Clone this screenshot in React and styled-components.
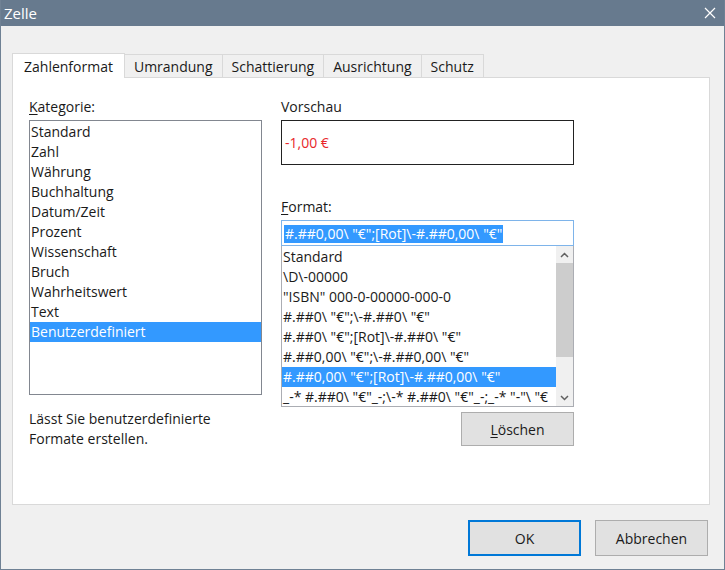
import React from 'react'
import styled, { createGlobalStyle } from 'styled-components'

const Global = createGlobalStyle`
    html, body { margin:0; padding:0; background:#f0f0f0; }
    * { box-sizing:border-box; }
`

const Window = styled.div`
    width:725px;
    height:570px;
    display:flex;
    flex-direction:column;
    background-color:#f0f0f0;
    border:1px solid #6f8194;
    border-top:none;
    font-family:"Open Sans", "Noto Sans", sans-serif;
    font-size:14px;
    color:#1a1a1a;
`

const TitleBar = styled.div`
    height:26px;
    background-color:#677a8e;
    color:#fff;
    display:flex;
    align-items:center;
    justify-content:space-between;
    padding:0 8px 0 3px;
    font-size:15px;
`

const Body = styled.div`
    flex:1;
    display:flex;
    flex-direction:column;
    padding:27px 14px 0 11px;
`

const Tabs = styled.div`
    display:flex;
    height:24px;
    align-items:flex-end;
`

const Tab = styled.div`
    height:${({active})=>active ? '25px' : '23px'};
    padding:0 ${({active})=>active ? '11px' : '9px'};
    display:flex;
    align-items:center;
    background-color:${({active})=>active ? '#fff' : '#f0f0f0'};
    border:1px solid #d9d9d9;
    border-bottom:none;
    margin-left:-1px;
    position:relative;
    z-index:${({active})=>active ? 1 : 0};
    margin-bottom:${({active})=>active ? '-1px' : '0'};
    &:first-child { margin-left:0; }
`

const Panel = styled.div`
    height:428px;
    background-color:#fff;
    border:1px solid #d9d9d9;
    padding:19px 0 0 16px;
    display:grid;
    grid-template-columns:233px 293px;
    column-gap:19px;
    align-items:start;
`

const Column = styled.div`
    display:flex;
    flex-direction:column;
`

const Label = styled.div`
    height:20px;
    line-height:20px;
    margin-bottom:3px;
    margin-top:${({top})=>top || 0}px;
`

const Mn = styled.span`
    text-decoration:underline;
    text-underline-offset:2px;
`

const ListBox = styled.div`
    height:${({h})=>h}px;
    border:1px solid ${({light})=>light ? '#abadb3' : '#828790'};
    border-top:${({light})=>light ? 'none' : undefined};
    padding-top:1px;
    background:#fff;
    overflow:hidden;
    display:flex;
    position:relative;
`

const Items = styled.div`
    flex:1;
    min-width:0;
`

const Item = styled.div`
    height:20px;
    line-height:20px;
    padding-left:1px;
    white-space:nowrap;
    overflow:hidden;
    background-color:${({sel})=>sel ? '#3399ff' : 'transparent'};
    color:${({sel})=>sel ? '#fff' : 'inherit'};
`

const Desc = styled.div`
    margin-top:14px;
    line-height:20px;
`

const Preview = styled.div`
    height:45px;
    border:1px solid #222;
    display:flex;
    align-items:center;
    padding-left:3px;
    color:#e8262a;
`

const Input = styled.div`
    height:26px;
    border:1px solid #7eb4ea;
    padding:3px 2px;
    background:#fff;
`

const Selected = styled.span`
    display:inline-block;
    height:18px;
    line-height:18px;
    background:#3399ff;
    color:#fff;
    padding:0 1px;
`

const Scroll = styled.div`
    width:17px;
    background:#f0f0f0;
    display:flex;
    flex-direction:column;
    align-items:center;
    margin-top:-1px;
`

const Arrow = styled.div`
    height:17px;
    width:17px;
    display:flex;
    align-items:center;
    justify-content:center;
`

const Thumb = styled.div`
    width:17px;
    height:94px;
    background:#cdcdcd;
`

const Spacer = styled.div`
    flex:1;
`

const Button = styled.div`
    width:113px;
    height:${({tall})=>tall ? '36px' : '34px'};
    display:flex;
    align-items:center;
    justify-content:center;
    background:#e1e1e1;
    border:${({primary})=>primary ? '2px solid #0078d7' : '1px solid #adadad'};
`

const RightAlign = styled.div`
    display:flex;
    justify-content:flex-end;
    margin-top:5px;
`

const Footer = styled.div`
    display:flex;
    justify-content:flex-end;
    gap:14px;
    margin-top:15px;
    padding-right:2px;
`

const Chevron = ({up}) => (
    <svg width="9" height="6" viewBox="0 0 9 6">
        <path d={up ? 'M1 5 L4.5 1.5 L8 5' : 'M1 1 L4.5 4.5 L8 1'} fill="none" stroke="#606060" strokeWidth="1.5"/>
    </svg>
)

const categories=['Standard','Zahl','Währung','Buchhaltung','Datum/Zeit','Prozent','Wissenschaft','Bruch','Wahrheitswert','Text','Benutzerdefiniert']

const formats=[
    'Standard',
    '\\D\\-00000',
    '"ISBN" 000-0-00000-000-0',
    '#.##0\\ "€";\\-#.##0\\ "€"',
    '#.##0\\ "€";[Rot]\\-#.##0\\ "€"',
    '#.##0,00\\ "€";\\-#.##0,00\\ "€"',
    '#.##0,00\\ "€";[Rot]\\-#.##0,00\\ "€"',
    '_-* #.##0\\ "€"_-;\\-* #.##0\\ "€"_-;_-* "-"\\ "€',
]

const App = () => {
  return (
    <Window>
        <Global/>
        <TitleBar>
            <span>Zelle</span>
            <svg width="12" height="12" viewBox="0 0 12 12">
                <path d="M1 1 L11 11 M11 1 L1 11" stroke="#fff" strokeWidth="1.2"/>
            </svg>
        </TitleBar>
        <Body>
            <Tabs>
                <Tab active>Zahlenformat</Tab>
                <Tab>Umrandung</Tab>
                <Tab>Schattierung</Tab>
                <Tab>Ausrichtung</Tab>
                <Tab>Schutz</Tab>
            </Tabs>
            <Panel>
                <Column>
                    <Label><Mn>K</Mn>ategorie:</Label>
                    <ListBox h={275}>
                        <Items>
                            {categories.map(c=>(
                                <Item key={c} sel={c==='Benutzerdefiniert'}>{c}</Item>
                            ))}
                        </Items>
                    </ListBox>
                    <Desc>Lässt Sie benutzerdefinierte<br/>Formate erstellen.</Desc>
                </Column>
                <Column>
                    <Label>Vorschau</Label>
                    <Preview>-1,00 €</Preview>
                    <Label top={32}><Mn>F</Mn>ormat:</Label>
                    <Input><Selected>#.##0,00\ "€";[Rot]\-#.##0,00\ "€"</Selected></Input>
                    <ListBox h={161} light>
                        <Items>
                            {formats.map((f,i)=>(
                                <Item key={i} sel={i===6}>{f}</Item>
                            ))}
                        </Items>
                        <Scroll>
                            <Arrow><Chevron up/></Arrow>
                            <Thumb/>
                            <Spacer/>
                            <Arrow><Chevron/></Arrow>
                        </Scroll>
                    </ListBox>
                    <RightAlign>
                        <Button><Mn>L</Mn>öschen</Button>
                    </RightAlign>
                </Column>
            </Panel>
            <Footer>
                <Button tall primary>OK</Button>
                <Button tall>Abbrechen</Button>
            </Footer>
        </Body>
    </Window>
  )
}

export default App
